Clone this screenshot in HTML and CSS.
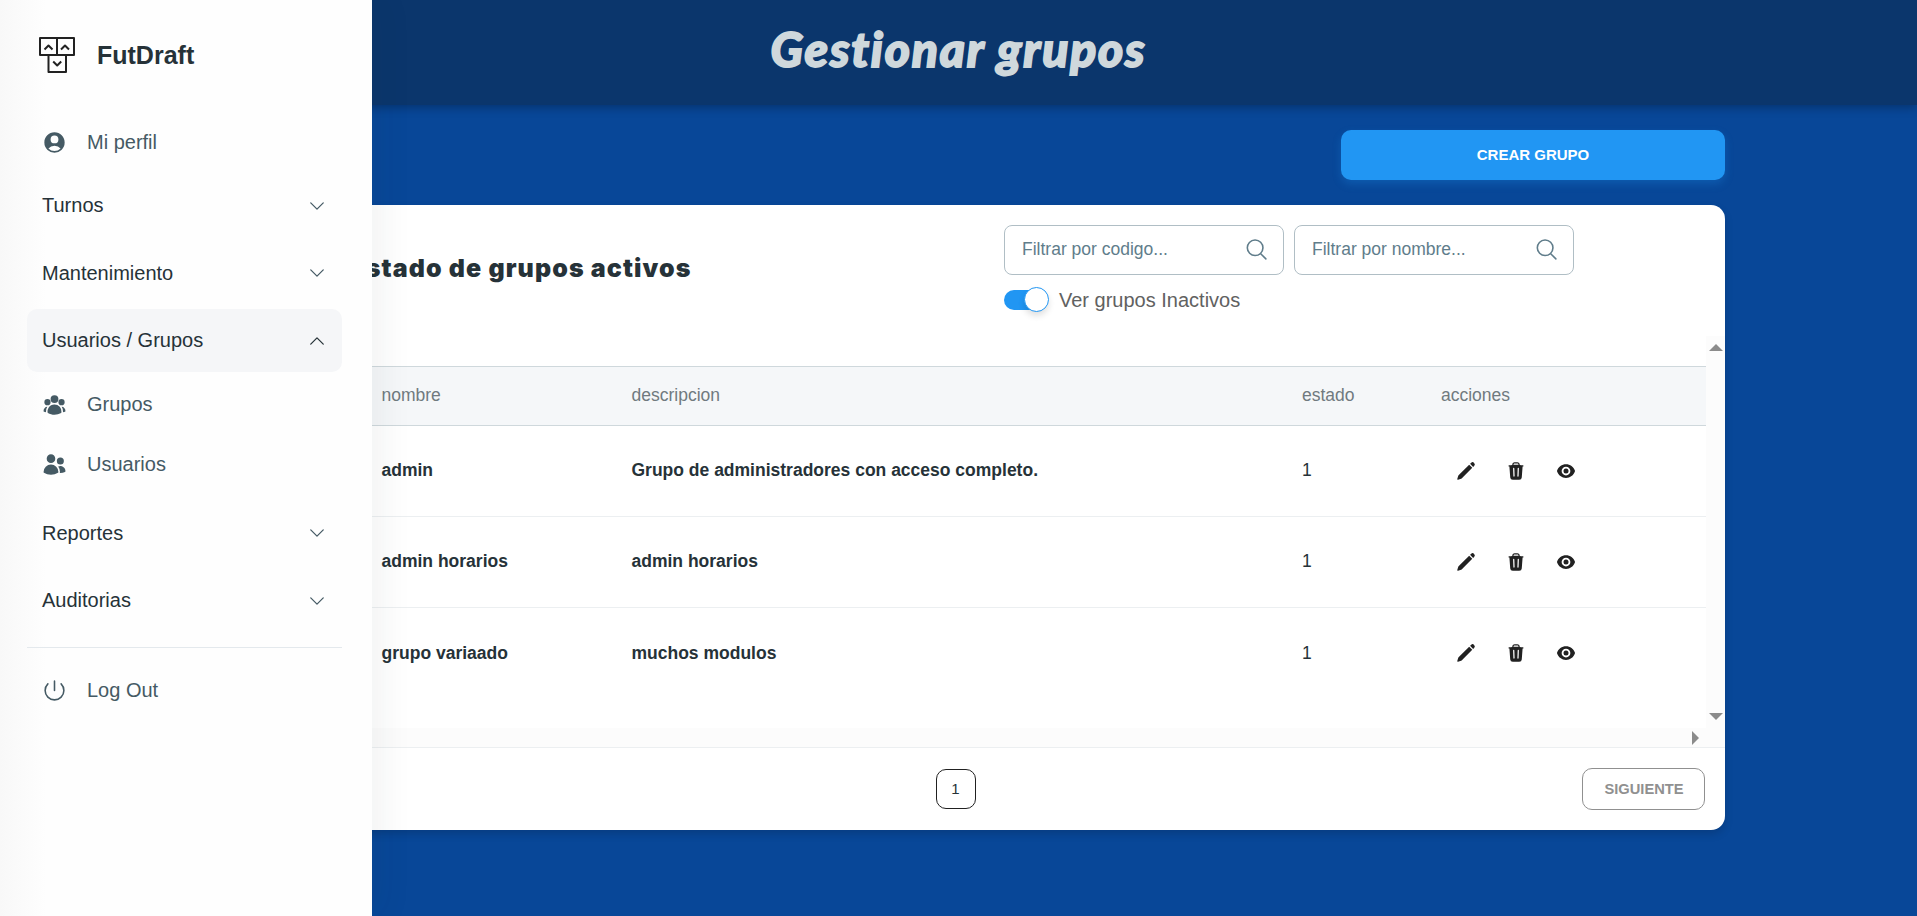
FILE: index.html
```html
<!DOCTYPE html>
<html lang="es">
<head>
<meta charset="utf-8">
<title>FutDraft - Gestionar grupos</title>
<link rel="stylesheet" href="styles.css">
</head>
<body>
<svg class="defs" width="0" height="0">
  <symbol id="down" viewBox="0 0 24 24"><path d="M19.5 8.25l-7.5 7.5-7.5-7.5" fill="none" stroke="currentColor" stroke-width="1.5" stroke-linecap="round" stroke-linejoin="round"/></symbol>
  <symbol id="search" viewBox="0 0 24 24"><path d="M21 21l-5.2-5.2m0 0A7.5 7.5 0 1 0 5.2 5.2a7.5 7.5 0 0 0 10.6 10.6z" fill="none" stroke="currentColor" stroke-width="1.5" stroke-linecap="round" stroke-linejoin="round"/></symbol>
  <symbol id="pencil" viewBox="0 0 24 24"><path d="M21.731 2.269a2.625 2.625 0 0 0-3.712 0l-1.157 1.157 3.712 3.712 1.157-1.157a2.625 2.625 0 0 0 0-3.712zM19.513 8.199l-3.712-3.712-12.15 12.15a5.25 5.25 0 0 0-1.32 2.214l-.8 2.685a.75.75 0 0 0 .933.933l2.685-.8a5.25 5.25 0 0 0 2.214-1.32L19.513 8.2z" fill="currentColor"/></symbol>
  <symbol id="trash" viewBox="0 0 24 24"><path fill="currentColor" fill-rule="evenodd" d="M16.5 4.478v.227a48.816 48.816 0 0 1 3.878.512.75.75 0 1 1-.256 1.478l-.209-.035-1.005 13.07a3 3 0 0 1-2.991 2.77H8.084a3 3 0 0 1-2.991-2.77L4.087 6.66l-.209.035a.75.75 0 0 1-.256-1.478A48.567 48.567 0 0 1 7.5 4.705v-.227c0-1.564 1.213-2.9 2.816-2.951a52.662 52.662 0 0 1 3.369 0c1.603.051 2.815 1.387 2.815 2.951zm-6.136-1.452a51.196 51.196 0 0 1 3.273 0C14.39 3.05 15 3.684 15 4.478v.113a49.488 49.488 0 0 0-6 0v-.113c0-.794.609-1.428 1.364-1.452zm-.355 5.945a.75.75 0 1 0-1.5.058l.347 9a.75.75 0 1 0 1.499-.058l-.346-9zm5.48.058a.75.75 0 1 0-1.498-.058l-.347 9a.75.75 0 0 0 1.5.058l.345-9z"/></symbol>
  <symbol id="eye" viewBox="0 0 24 24"><path d="M12 15a3 3 0 1 0 0-6 3 3 0 0 0 0 6z" fill="currentColor"/><path fill="currentColor" fill-rule="evenodd" d="M1.323 11.447C2.811 6.976 7.028 3.75 12.001 3.75c4.97 0 9.185 3.223 10.675 7.69.12.362.12.752 0 1.113-1.487 4.471-5.705 7.697-10.677 7.697-4.97 0-9.186-3.223-10.675-7.69a1.762 1.762 0 0 1 0-1.113zM17.25 12a5.25 5.25 0 1 1-10.5 0 5.25 5.25 0 0 1 10.5 0z"/></symbol>
</svg>

<header class="topbar"><h1>Gestionar grupos</h1></header>

<main class="content">
  <div class="toolbar"><button class="create">CREAR GRUPO</button></div>
  <section class="card">
    <div class="card-head">
      <h2>Listado de grupos activos</h2>
      <div class="filters">
        <div class="fields">
          <div class="field"><span>Filtrar por codigo...</span><svg><use href="#search"/></svg></div>
          <div class="field"><span>Filtrar por nombre...</span><svg><use href="#search"/></svg></div>
        </div>
        <div class="toggle"><span class="track"><i></i></span><span>Ver grupos Inactivos</span></div>
      </div>
    </div>
    <div class="scroller">
      <div class="table">
        <div class="row head"><span></span><span>nombre</span><span>descripcion</span><span>estado</span><span>acciones</span></div>
        <div class="row"><span></span><b>admin</b><b>Grupo de administradores con acceso completo.</b><span>1</span><div class="actions"><svg><use href="#pencil"/></svg><svg><use href="#trash"/></svg><svg><use href="#eye"/></svg></div></div>
        <div class="row"><span></span><b>admin horarios</b><b>admin horarios</b><span>1</span><div class="actions"><svg><use href="#pencil"/></svg><svg><use href="#trash"/></svg><svg><use href="#eye"/></svg></div></div>
        <div class="row last"><span></span><b>grupo variaado</b><b>muchos modulos</b><span>1</span><div class="actions"><svg><use href="#pencil"/></svg><svg><use href="#trash"/></svg><svg><use href="#eye"/></svg></div></div>
      </div>
      <div class="vbar"><i class="up"></i><i class="dn"></i></div>
      <div class="hbar"><i class="rt"></i></div>
    </div>
    <footer class="pager"><button class="next prev">ANTERIOR</button><span class="page">1</span><button class="next">SIGUIENTE</button></footer>
  </section>
</main>

<aside class="drawer">
  <div class="brand">
    <svg viewBox="0 0 36 36" fill="none" stroke="#222" stroke-width="2" stroke-linejoin="round"><path d="M1 1h17v17H1zM18 1h17v17H18zM9.500 18h17.500v17H9.500z"/><path d="M5.500 12.500L9.500 8.500l4 4M22 12.500l4-4 4 4M14.200 24.500l4 4 4-4"/></svg>
    <span>FutDraft</span>
  </div>
  <nav class="menu">
    <a class="item profile"><svg viewBox="0 0 24 24"><path fill="currentColor" fill-rule="evenodd" d="M18.685 19.097A9.723 9.723 0 0 0 21.750 12c0-5.385-4.365-9.750-9.750-9.750S2.250 6.615 2.250 12a9.723 9.723 0 0 0 3.065 7.097A9.716 9.716 0 0 0 12 21.750a9.716 9.716 0 0 0 6.685-2.653zm-12.540-1.285A7.486 7.486 0 0 1 12 15a7.486 7.486 0 0 1 5.855 2.812A8.224 8.224 0 0 1 12 20.250a8.224 8.224 0 0 1-5.855-2.438zM15.750 9a3.750 3.750 0 1 1-7.500 0 3.750 3.750 0 0 1 7.500 0z"/></svg>Mi perfil</a>
    <a class="group">Turnos<svg><use href="#down"/></svg></a>
    <a class="group">Mantenimiento<svg><use href="#down"/></svg></a>
    <a class="group open">Usuarios / Grupos<svg><use href="#down"/></svg></a>
    <div class="sub">
      <a class="item"><svg viewBox="0 0 24 24"><path fill="currentColor" fill-rule="evenodd" d="M8.250 6.750a3.750 3.750 0 1 1 7.500 0 3.750 3.750 0 0 1-7.500 0zM15.750 9.750a3 3 0 1 1 6 0 3 3 0 0 1-6 0zM2.250 9.750a3 3 0 1 1 6 0 3 3 0 0 1-6 0zM6.310 15.117A6.745 6.745 0 0 1 12 12a6.745 6.745 0 0 1 6.709 7.498.75.75 0 0 1-.372.568A12.696 12.696 0 0 1 12 21.750c-2.305 0-4.470-.612-6.337-1.684a.75.75 0 0 1-.372-.568 6.787 6.787 0 0 1 1.019-4.381z"/><path fill="currentColor" d="M5.082 14.254a8.287 8.287 0 0 0-1.308 5.135 9.687 9.687 0 0 1-1.764-.440l-.115-.040a.563.563 0 0 1-.373-.487l-.010-.121a3.750 3.750 0 0 1 3.570-4.047zM20.226 19.389a8.287 8.287 0 0 0-1.308-5.135 3.750 3.750 0 0 1 3.570 4.047l-.010.121a.563.563 0 0 1-.373.486l-.115.040c-.567.200-1.156.349-1.764.441z"/></svg>Grupos</a>
      <a class="item"><svg viewBox="0 0 24 24"><path fill="currentColor" d="M4.500 6.375a4.125 4.125 0 1 1 8.250 0 4.125 4.125 0 0 1-8.250 0zM14.250 8.625a3.375 3.375 0 1 1 6.750 0 3.375 3.375 0 0 1-6.750 0zM1.500 19.125a7.125 7.125 0 0 1 14.250 0v.003l-.001.119a.75.75 0 0 1-.363.630 13.067 13.067 0 0 1-6.761 1.873c-2.472 0-4.786-.684-6.760-1.873a.75.75 0 0 1-.364-.630l-.001-.122zM17.250 19.128l-.001.144a2.250 2.250 0 0 1-.233.960 10.088 10.088 0 0 0 5.060-1.010.75.75 0 0 0 .420-.643 4.875 4.875 0 0 0-6.957-4.611 8.586 8.586 0 0 1 1.710 5.157v.003z"/></svg>Usuarios</a>
    </div>
    <a class="group">Reportes<svg><use href="#down"/></svg></a>
    <a class="group">Auditorias<svg><use href="#down"/></svg></a>
    <hr>
    <a class="item"><svg viewBox="0 0 24 24"><path d="M5.636 5.636a9 9 0 1 0 12.728 0M12 3v9" fill="none" stroke="currentColor" stroke-width="1.500" stroke-linecap="round"/></svg>Log Out</a>
  </nav>
</aside>
</body>
</html>
```
FILE: styles.css
```css
* { box-sizing: border-box; }
body {
  margin: 0;
  height: 916px;
  overflow: hidden;
  position: relative;
  background: #084798;
  font-family: "Liberation Sans", Arial, sans-serif;
  color: #263238;
}
svg { display: block; flex: none; }
.defs { position: absolute; }
button { font-family: inherit; font-weight: 700; }

.topbar {
  height: 105px;
  display: flex;
  justify-content: center;
  background: #0b366c;
  box-shadow: 0 2px 10px rgba(0, 0, 0, .3);
}
h1 {
  margin: 0;
  padding-top: 19px;
  font: italic 900 48px/60px Lato, sans-serif;
  letter-spacing: 1.8px;
  -webkit-text-stroke: 1.8px #cfd8dc;
  color: #cfd8dc;
  white-space: nowrap;
}

.content { width: 1533px; margin: 0 auto; }
.toolbar { display: flex; justify-content: flex-end; padding: 25px 0; }
.create {
  width: 384px;
  height: 50px;
  padding-bottom: 3px;
  border: 0;
  border-radius: 10px;
  background: #2196f3;
  color: #fff;
  font-size: 15px;
  box-shadow: 0 4px 8px rgba(33, 150, 243, .25);
}
.card {
  height: 625px;
  display: flex;
  flex-direction: column;
  background: #fff;
  border-radius: 14px;
  box-shadow: 0 4px 8px rgba(0, 0, 0, .15);
  overflow: hidden;
}
.card-head {
  height: 131px;
  padding: 20px 0 0 150px;
  display: grid;
  grid-template-columns: 662px auto;
}
h2 {
  margin: 0;
  padding-top: 26px;
  font: 900 25px/34px Inter, sans-serif;
  letter-spacing: 1.1px;
  white-space: nowrap;
}
.fields { display: flex; gap: 10px; }
.field {
  width: 280px;
  height: 50px;
  display: flex;
  align-items: center;
  justify-content: space-between;
  padding: 0 14px 1px 17px;
  border: 1px solid #b0bec5;
  border-radius: 8px;
  font-size: 17.5px;
  color: #607d8b;
}
.field svg { width: 25px; height: 25px; }
.toggle {
  display: flex;
  align-items: center;
  gap: 10px;
  margin-top: 10px;
  font-size: 20px;
  line-height: 30px;
  color: #616161;
}
.track { position: relative; width: 45px; height: 20px; }
.track::before { content: ""; display: block; width: 40px; height: 20px; border-radius: 10px; background: #2196f3; }
.track i {
  position: absolute;
  right: 0;
  top: -3px;
  width: 25px;
  height: 25px;
  border-radius: 50%;
  background: #fff;
  border: 1px solid #2196f3;
  box-shadow: 0 4px 6px rgba(0, 0, 0, .12);
}

.scroller {
  height: 412px;
  display: grid;
  grid-template: 392px 20px / 1514px 19px;
}
.table { padding-top: 30px; }
.row {
  height: 91px;
  display: grid;
  grid-template-columns: 189.5px 250px 670.5px 139px 1fr;
  align-items: center;
  padding-bottom: 1px;
  border-bottom: 1px solid #eceff1;
  font-size: 17.5px;
}
.row.head {
  height: 60px;
  background: #f5f7f9;
  border-top: 1px solid #cfd8dc;
  border-bottom-color: #cfd8dc;
  color: #707a7f;
}
.row.last { border: 0; }
.actions { display: flex; gap: 30px; padding-left: 15px; color: #212121; }
.actions svg { width: 20px; height: 20px; }
.vbar {
  display: flex;
  flex-direction: column;
  align-items: center;
  justify-content: space-between;
  padding: 8px 0 8px;
  background: #fcfcfc;
}
.hbar {
  grid-column: 1 / 3;
  display: flex;
  justify-content: flex-end;
  align-items: center;
  padding-right: 26px;
  background: #fcfcfc;
  border-bottom: 1px solid #eceff1;
}
.up, .dn { border: 7px solid transparent; border-width: 0 7px 7px; border-bottom-color: #8b8b8b; }
.dn { border-width: 7px 7px 0; border-top-color: #8b8b8b; }
.rt { border: 7px solid transparent; border-width: 7px 0 7px 7px; border-left-color: #8b8b8b; }

.pager { flex: 1; display: flex; align-items: center; justify-content: space-between; padding: 0 20px; }
.next {
  width: 123px;
  height: 42px;
  padding: 0 0 1px 1px;
  border: 1px solid #909090;
  border-radius: 10px;
  background: #fff;
  color: #909090;
  font-size: 14.7px;
}
.prev { width: 117px; }
.page {
  width: 40px;
  height: 40px;
  border: 1px solid #212121;
  border-radius: 10px;
  font-size: 15px;
  line-height: 37px;
  text-align: center;
}

.drawer {
  position: absolute;
  left: 0;
  top: 0;
  width: 372px;
  height: 916px;
  padding: 37px 30px 0 27px;
  background: #fefefe linear-gradient(90deg, #f8f8f8, #fefefe 46px);
  box-shadow: 10px 0 32px rgba(38, 50, 56, .06);
}
.brand {
  display: flex;
  align-items: center;
  gap: 22px;
  padding-left: 12px;
  font-size: 25px;
  font-weight: 700;
}
.brand svg { width: 36px; height: 36px; }
.menu { padding-top: 39px; font-size: 20px; }
.item {
  height: 60px;
  display: flex;
  align-items: center;
  gap: 20px;
  padding-left: 15px;
  color: #455a64;
}
.item svg { width: 25px; height: 25px; }
.profile { margin-bottom: 2px; }
.group {
  height: 63px;
  margin-bottom: 4.5px;
  display: flex;
  align-items: center;
  justify-content: space-between;
  padding: 0 15px;
  border-radius: 10px;
}
.group svg { width: 20px; height: 20px; color: #455a64; }
.group.open { background: #f5f6f8; margin-bottom: 2.5px; }
.open svg { transform: rotate(180deg); color: #263238; }
.sub { margin-bottom: 7px; }
hr { margin: 14.5px 0 13px; border: 0; border-top: 1px solid #e4e9ed; }
```
